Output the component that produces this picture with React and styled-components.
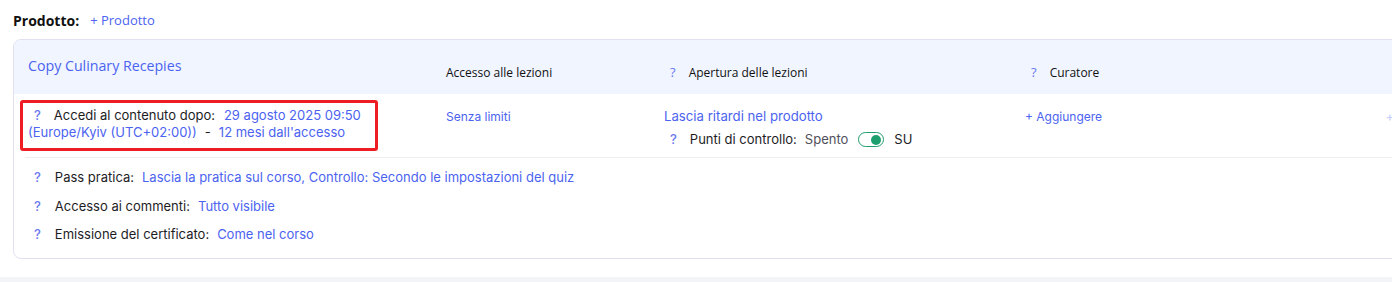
import React from "react";
import styled, { createGlobalStyle } from "styled-components";

const Global = createGlobalStyle`
  html, body { margin: 0; padding: 0; background: #fff; }
  body { font-family: Inter, "Noto Sans", sans-serif; color: #1d1d1f; overflow: hidden; }
`;

const Page = styled.div`
  width: 1392px;
  height: 282px;
  display: flex;
  flex-direction: column;
  overflow: hidden;
`;

const Content = styled.div`
  padding: 11px 0 0 13px;
  height: 277px;
  box-sizing: border-box;
`;

const TopLine = styled.div`
  display: flex;
  align-items: center;
  gap: 11px;
  height: 18px;
  font-family: "Open Sans", sans-serif;
`;

const Strong = styled.span`
  font-weight: 700;
  font-size: 14px;
  color: #111;
`;

const Link = styled.span`
  color: #4b63f0;
  font-size: ${(p) => p.$size || "13px"};
  font-family: ${(p) => (p.$alt ? '"Open Sans", sans-serif' : "inherit")};
  white-space: nowrap;
`;

const Card = styled.div`
  margin-top: 10px;
  width: 1420px;
  border: 1px solid #e2e0f0;
  border-radius: 8px;
  overflow: hidden;
  background: #fff;
`;

const Grid = styled.div`
  display: grid;
  grid-template-columns: 418px 218px 361px 1fr;
  padding-left: 14px;
`;

const Header = styled(Grid)`
  background: #f0f5ff;
  height: 54px;
  box-sizing: border-box;
`;

const Title = styled.div`
  font-family: "Open Sans", sans-serif;
  font-size: 14.2px;
  color: #4b63f0;
  padding-top: 16px;
`;

const HeadCell = styled.div`
  display: flex;
  align-items: center;
  gap: ${(p) => (p.$indent ? "13px" : "0")};
  font-family: "Open Sans", sans-serif;
  font-size: 12px;
  color: #111;
  padding-top: 24px;
  height: 16px;
  padding-left: ${(p) => (p.$indent ? "6px" : "0")};
`;

const Q = styled.span`
  color: #6a78f0;
  font-size: 13px;
  font-weight: 500;
  display: inline-block;
  margin-left: ${(p) => p.$ml || "0"};
  margin-right: ${(p) => p.$mr || "0"};
`;

const BodyRow = styled(Grid)`
  position: relative;
  padding-top: 6px;
  height: 63px;
  box-sizing: border-box;
`;

const Highlight = styled.div`
  margin-left: -8px;
  width: 358px;
  box-sizing: border-box;
  border: 3px solid #ee1d23;
  border-radius: 3px;
  padding: 4px 4px 5px 5px;
  height: 51px;
  font-size: 13px;
  line-height: 17px;
  white-space: nowrap;
`;

const Label = styled.span`
  color: #1d1d1f;
  margin-left: ${(p) => p.$ml || "0"};
  margin-right: ${(p) => p.$mr || "0"};
`;

const Cell = styled.div`
  font-size: 13px;
  line-height: 17px;
  padding-top: 8px;
  display: flex;
  flex-direction: column;
  gap: 6px;
  align-items: flex-start;
`;

const InlineRow = styled.div`
  display: flex;
  align-items: center;
  padding-left: 6px;
`;

const Muted = styled.span`
  color: #50505a;
`;

const Toggle = styled.span`
  width: 26px;
  height: 15px;
  border: 1.5px solid #1f9e6e;
  border-radius: 8px;
  display: inline-flex;
  align-items: center;
  justify-content: flex-end;
  padding: 0 2px;
  margin: 0 10px;
  box-sizing: border-box;
`;

const Knob = styled.span`
  width: 10px;
  height: 10px;
  border-radius: 50%;
  background: #1f9e6e;
`;

const FaintPlus = styled.span`
  position: absolute;
  right: 40px;
  top: 14px;
  color: #c3cdfc;
  font-size: 13px;
`;

const Divider = styled.div`
  margin-left: 11px;
  border-top: 1px solid #eeeef2;
`;

const Settings = styled.div`
  padding: 11px 0 15px 20px;
  display: flex;
  flex-direction: column;
  gap: 11.5px;
`;

const SettingRow = styled.div`
  display: flex;
  align-items: center;
  font-size: 13px;
  line-height: 17px;
`;

const Footer = styled.div`
  flex: 1;
  background: #f3f4f7;
`;

function Setting({ label, value }) {
  return (
    <SettingRow>
      <Q $mr="14px">?</Q>
      <Label $mr="8px">{label}</Label>
      <Link>{value}</Link>
    </SettingRow>
  );
}

export default function App() {
  return (
    <Page>
      <Global />
      <Content>
        <TopLine>
          <Strong>Prodotto:</Strong>
          <Link $alt>+ Prodotto</Link>
        </TopLine>
        <Card>
          <Header>
            <Title>Copy Culinary Recepies</Title>
            <HeadCell>Accesso alle lezioni</HeadCell>
            <HeadCell $indent>
              <Q>?</Q>
              <span>Apertura delle lezioni</span>
            </HeadCell>
            <HeadCell $indent>
              <Q>?</Q>
              <span>Curatore</span>
            </HeadCell>
          </Header>
          <BodyRow>
            <Highlight>
              <Q $ml="6px" $mr="13px">?</Q>
              <Label $mr="9px">Accedi al contenuto dopo:</Label>
              <Link>29 agosto 2025 09:50</Link>
              <br />
              <Link>(Europe/Kyiv (UTC+02:00))</Link>
              <Label $ml="8px" $mr="8px">-</Label>
              <Link>12 mesi dall'accesso</Link>
            </Highlight>
            <Cell>
              <Link $size="12px">Senza limiti</Link>
            </Cell>
            <Cell>
              <Link $size="13.2px">Lascia ritardi nel prodotto</Link>
              <InlineRow>
                <Q $mr="13px">?</Q>
                <Label $mr="8px">Punti di controllo:</Label>
                <Muted>Spento</Muted>
                <Toggle>
                  <Knob />
                </Toggle>
                <Label>SU</Label>
              </InlineRow>
            </Cell>
            <Cell>
              <Link $size="12px">+ Aggiungere</Link>
            </Cell>
            <FaintPlus>+</FaintPlus>
          </BodyRow>
          <Divider />
          <Settings>
            <Setting
              label="Pass pratica:"
              value="Lascia la pratica sul corso, Controllo: Secondo le impostazioni del quiz"
            />
            <Setting label="Accesso ai commenti:" value="Tutto visibile" />
            <Setting label="Emissione del certificato:" value="Come nel corso" />
          </Settings>
        </Card>
      </Content>
      <Footer />
    </Page>
  );
}
